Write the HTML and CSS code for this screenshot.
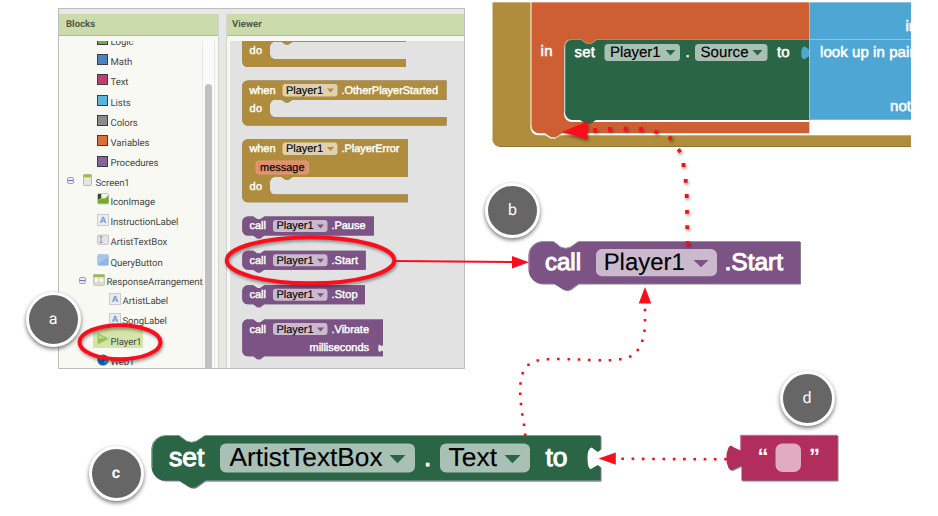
FILE: index.html
```html
<!DOCTYPE html>
<html lang="en">
<head>
<meta charset="utf-8">
<title>Blocks tutorial</title>
<link rel="stylesheet" href="styles.css">
</head>
<body>
<main class="canvas">
  <section class="window">
    <div class="pane pane-blocks">
      <h2 class="pane-title">Blocks</h2>
      <div class="tree">
        <ul class="rows">
          <li class="row d2"><i class="swatch logic"></i><span>Logic</span></li>
          <li class="row d2"><i class="swatch math"></i><span>Math</span></li>
          <li class="row d2"><i class="swatch text"></i><span>Text</span></li>
          <li class="row d2"><i class="swatch lists"></i><span>Lists</span></li>
          <li class="row d2"><i class="swatch colors"></i><span>Colors</span></li>
          <li class="row d2"><i class="swatch variables"></i><span>Variables</span></li>
          <li class="row d2"><i class="swatch procedures"></i><span>Procedures</span></li>
          <li class="row short d0"><i class="toggle"></i><svg class="icon icon-screen" viewBox="0 0 12 12"><rect x="1.5" y=".5" width="8" height="11" rx="1" fill="#e6e6e0" stroke="#b5b9a9"/><path d="M1.5 .7h8v2.6h-8z" fill="#9dbb45"/></svg><span>Screen1</span></li>
          <li class="row short d2"><svg class="icon" viewBox="0 0 12 12"><rect x=".5" y=".5" width="11" height="10.5" rx="1" fill="#dce8cf" stroke="#c3c9bd"/><path d="M1 1h3.5v4L1 7z" fill="#3d4b2d"/><path d="M1 10.5V7.500l4-2 3 0 3.500-3v8z" fill="#75aa25"/><path d="M4.500 1h6.500v1L8 5H4.500z" fill="#f2f5ed"/></svg><span>IconImage</span></li>
          <li class="row d2"><i class="icon label-icon">A</i><span>InstructionLabel</span></li>
          <li class="row d2"><svg class="icon" viewBox="0 0 12 12"><rect x=".5" y="1" width="11" height="9.500" rx="1" fill="#e4e4e6" stroke="#c6c6c9"/><path d="M2.500 2.500h3M4 2.500v6M2.500 8.500h3" stroke="#9295a4" fill="none"/></svg><span>ArtistTextBox</span></li>
          <li class="row d2"><svg class="icon" viewBox="0 0 12 12"><rect x=".5" y=".5" width="11" height="11" rx="1.500" fill="#8fb7e2" stroke="#b3cbe5"/><path d="M1 1h10v2L1 10z" fill="#a6c6ea"/></svg><span>QueryButton</span></li>
          <li class="row short d1"><i class="toggle"></i><svg class="icon icon-arr" viewBox="0 0 12 12"><rect x=".5" y=".5" width="11" height="11" rx="1" fill="#d9ddcf" stroke="#c5cabb"/><path d="M.5.500h11v2.500H.5z" fill="#9dbb45"/><path d="M2 4.500h3v3H2zM7 4.500h3v3H7z" fill="#fff"/></svg><span>ResponseArrangement</span></li>
          <li class="row short d3"><i class="icon label-icon">A</i><span>ArtistLabel</span></li>
          <li class="row d3"><i class="icon label-icon">A</i><span>SongLabel</span></li>
          <li class="row d2 selected"><svg class="icon" viewBox="0 0 12 12"><path d="M.8 .3 11.500 5.800 .8 11.300z" fill="#94bf4b" stroke="#b3ce83"/><path d="M2 2.200 8.500 5.500H2z" fill="#c5dc95"/></svg><span>Player1</span></li>
          <li class="row d2"><svg class="icon" viewBox="0 0 12 12"><circle cx="6" cy="6" r="5.600" fill="#1560ad"/><path d="M2 2q3-2 5 0l-1 3-3 2zM8 5l3 1-2 4-2-2z" fill="#389bdb"/></svg><span>Web1</span></li>
        </ul>
        <div class="scrollbar"><div class="thumb"></div></div>
      </div>
    </div>
    <div class="pane pane-viewer">
      <h2 class="pane-title">Viewer</h2>
      <svg class="workspace" viewBox="230 41 234 327">
        <g class="gold raised-s">
          <path d="M242.300 36H406v5.700H292.500l-4 2.800h-3l-4-2.800H275a5 5 0 0 0-5 5v7.600a5 5 0 0 0 5 5H406V67H247.800a5.500 5.500 0 0 1-5.500-5.500z"/>
          <path d="M247.800 80.500H446.500V99.700H292.500l-4 2.800h-3l-4-2.800H275a5 5 0 0 0-5 5v7.600a5 5 0 0 0 5 5H446.500V125.500H247.800a5.500 5.500 0 0 1-5.500-5.500V86a5.500 5.500 0 0 1 5.500-5.500z"/>
          <path d="M247.800 139.200H408V177H292.500l-4 2.800h-3l-4-2.800H275a5 5 0 0 0-5 5v7.600a5 5 0 0 0 5 5H408V202.300H247.800a5.500 5.500 0 0 1-5.500-5.500V144.700a5.500 5.500 0 0 1 5.500-5.500z"/>
        </g>
        <g class="purple raised-s">
          <path d="M247.800 216.500h5.500l4 2.800h3l4-2.800H374v19H264.300l-4 2.900h-3l-4-2.900h-5.500a5.500 5.500 0 0 1-5.500-5.500v-8a5.500 5.500 0 0 1 5.500-5.500z"/>
          <path d="M247.800 250.700h5.500l4 2.800h3l4-2.800H365.700v19H264.300l-4 2.900h-3l-4-2.900h-5.500a5.500 5.500 0 0 1-5.500-5.500v-8a5.500 5.500 0 0 1 5.500-5.500z"/>
          <path d="M247.800 285.300h5.500l4 2.800h3l4-2.800H365v19H264.300l-4 2.900h-3l-4-2.900h-5.500a5.500 5.500 0 0 1-5.500-5.500v-8a5.500 5.500 0 0 1 5.500-5.500z"/>
          <path d="M247.800 319.600h5.500l4 2.800h3l4-2.800H383v25.500l-1.200 1-3-2q-1.500 4 0 8.500l3-1.800 1.200 1v4.500H264.300l-4 2.900h-3l-4-2.900h-5.500a5.500 5.500 0 0 1-5.500-5.500v-26a5.500 5.500 0 0 1 5.500-5.500z"/>
        </g>
        <g class="pill-gold">
          <rect x="282.500" y="84" width="55" height="12.500" rx="3"/>
          <rect x="282.500" y="142.500" width="55" height="12.500" rx="3"/>
        </g>
        <rect class="pill-msg" x="256" y="161" width="52.500" height="13" rx="3"/>
        <g class="pill-purple">
          <rect x="273" y="220" width="54.500" height="12" rx="3"/>
          <rect x="273" y="254.200" width="54.500" height="12" rx="3"/>
          <rect x="273" y="288.800" width="54.500" height="12" rx="3"/>
          <rect x="273" y="323" width="54.500" height="12" rx="3"/>
        </g>
        <path class="gold" d="M327 88.500h7l-3.500 4zM327 147h7l-3.500 4z"/>
        <path class="purple" d="M317 224.500h7l-3.500 4zM317 258.700h7l-3.500 4zM317 293.200h7l-3.500 4zM317 327.500h7l-3.500 4z"/>
        <g class="t small white">
          <text x="249.500" y="53.900" textLength="12.500">do</text>
          <text x="249.500" y="93.800" textLength="26">when</text>
          <text x="341.500" y="93.800" textLength="96.500">.OtherPlayerStarted</text>
          <text x="249.500" y="112.400" textLength="12.500">do</text>
          <text x="249.500" y="152.200" textLength="26">when</text>
          <text x="341.500" y="152.200" textLength="58">.PlayerError</text>
          <text x="249.500" y="189.700" textLength="12.500">do</text>
          <text x="249.500" y="229.300" textLength="16.500">call</text>
          <text x="331.500" y="229.300" textLength="34">.Pause</text>
          <text x="249.500" y="263.800" textLength="16.500">call</text>
          <text x="331.500" y="263.800" textLength="26.500">.Start</text>
          <text x="249.500" y="298.300" textLength="16.500">call</text>
          <text x="331.500" y="298.300" textLength="26">.Stop</text>
          <text x="249.500" y="332.600" textLength="16.500">call</text>
          <text x="331.500" y="332.600" textLength="37.500">.Vibrate</text>
          <text x="309.500" y="351" textLength="59.500">milliseconds</text>
        </g>
        <g class="t small black">
          <text x="286" y="93.800" textLength="37">Player1</text>
          <text x="286" y="152.200" textLength="37">Player1</text>
          <text x="260" y="171" textLength="44.500">message</text>
          <text x="276.500" y="229.300" textLength="37">Player1</text>
          <text x="276.500" y="263.800" textLength="37">Player1</text>
          <text x="276.500" y="298.300" textLength="37">Player1</text>
          <text x="276.500" y="332.600" textLength="37">Player1</text>
        </g>
      </svg>
    </div>
  </section>

  <svg class="layer" viewBox="0 0 938 516">
    <defs>
      <clipPath id="crop"><rect x="492" y="2" width="419" height="146"/></clipPath>
    </defs>
    <g clip-path="url(#crop)">
      <path class="gold" d="M492.300 0H911V147H500.500a8 8 0 0 1-8.200-8z"/>
      <path class="white-fill" d="M530.500 0H911V135.300H560.500l-5 3.200h-5l-5-3.200H538a8 8 0 0 1-7.500-7z"/>
      <path class="orange" d="M531.500 0H809.300V133.300H562l-6 4h-5l-6-4H539a7.500 7.500 0 0 1-7.500-7.500z"/>
      <path class="white-fill" d="M564 112V46a7 7 0 0 1 7-7H809.300V122H572a8 8 0 0 1-8-8z"/>
      <path class="green" d="M572 39.300h9l5.500 4h5l5.500-4H809.300V120H596l-5.500 3.800h-5L580 120h-7.500a7.500 7.500 0 0 1-7.500-7.500V46.800a7 7 0 0 1 7-7.500z"/>
      <path class="orange" d="M564 38.500H809.300V39.300H597l-5.500 4h-5l-5.500-4H564z"/>
      <path class="edge-green" d="M565 112V47a7 7 0 0 1 7-7.500h9l5.500 4h5l5.500-4H809"/>
      <path class="orange" d="M563.500 38v9h.8a7.500 7.500 0 0 1 7.500-8V38z"/>
      <path class="blue" d="M809.300 0H911V119.700H809.300V56l-4.500 3q-3.500 1-3.500-6t3.500-6.500l4.500 3z"/>
      <path d="M809.500 2V119M809.500 39.500H911" fill="none" stroke="#8dc6e4"/>
      <path d="M531.300 2V126M561 135.600H911" fill="none" stroke="#e3a788" stroke-width=".7"/>
      <path d="M492 2.500H911M492.500 2V138" fill="none" stroke="#fff" stroke-opacity=".35"/>
      <path d="M500 146.500H911" fill="none" stroke="#947431"/>
      <g class="pill-green"><rect x="604.500" y="44" width="75.500" height="17" rx="3.500"/><rect x="695" y="44" width="72.500" height="17" rx="3.500"/></g>
      <path class="green" d="M665.500 50h10l-5 5.500zM752.500 50h10l-5 5.500z"/>
      <g class="t mid white">
        <text x="540.500" y="56" textLength="12">in</text>
        <text x="574.500" y="57" textLength="20.500">set</text>
        <text x="685.500" y="57">.</text>
        <text x="777" y="57" textLength="12.500">to</text>
        <text x="820" y="57" textLength="102">look up in pairs</text>
        <text x="905.500" y="30.500">in</text>
        <text x="890" y="111" textLength="21">not</text>
      </g>
      <g class="t mid black"><text x="610" y="57" textLength="50.500">Player1</text><text x="700.500" y="57" textLength="48">Source</text></g>
    </g>

    <g class="raised">
      <path class="purple" d="M542.500 241.500H553.500l7 5.500q5 2.500 10 0l8-5.500H800V283.500H578l-7.500 5.500q-4 2-8 0l-8.500-5.500H542.500a14 14 0 0 1-14-14V255.500a14 14 0 0 1 14-14z"/>
      <path class="edge-purple" d="M529 270V255.500a14 14 0 0 1 14-14h10.500l7 5.500q5 2.500 10 0l8-5.500H800"/>
    </g>
    <rect class="pill-purple" x="596" y="249" width="121" height="27.300" rx="6"/>
    <path class="purple" d="M693.500 260h15l-7.500 7.300z"/>
    <g class="t big-call white"><text x="545" y="270.300" textLength="36" lengthAdjust="spacingAndGlyphs">call</text><text x="724.500" y="270.300" textLength="58.500" lengthAdjust="spacingAndGlyphs">.Start</text></g>
    <text class="t big-call black" x="603.700" y="270.300" textLength="81" lengthAdjust="spacingAndGlyphs">Player1</text>

    <g class="raised">
      <path class="green" d="M165.500 435.500H179l7.500 5.500q5 2.500 10 0l8.500-5.500H600.500V480.500H205l-8.500 6q-4 2.500-8 0l-9.500-6H165.500a14 14 0 0 1-14-14V449.500a14 14 0 0 1 14-14z"/>
    </g>
    <path class="edge-green" d="M152 468V449.500a14 14 0 0 1 14-14h13l7.500 5.500q5 2.500 10 0l8.500-5.500H600M206 481H601"/>
    <path class="white-fill" d="M602 449l-4.300 3-6-4.500q-4.200 1-4.200 10.500t3 11.200l7.200-4.200 4.300 3z"/>
    <g class="pill-green"><rect x="220" y="443.500" width="195" height="29" rx="6"/><rect x="440" y="443.500" width="90" height="29" rx="6"/></g>
    <path class="green" d="M389.500 455h16l-8 8.300zM504.500 455h16l-8 8.300z"/>
    <g class="t big-set white"><text x="169" y="466" textLength="35.500" lengthAdjust="spacingAndGlyphs">set</text><text x="424" y="466">.</text><text x="545.500" y="466" textLength="22" lengthAdjust="spacingAndGlyphs">to</text></g>
    <g class="t big-set black"><text x="229.500" y="466" textLength="153" lengthAdjust="spacingAndGlyphs">ArtistTextBox</text><text x="448.500" y="466" textLength="48.500" lengthAdjust="spacingAndGlyphs">Text</text></g>

    <g class="raised">
      <path class="magenta" d="M740.500 435H837.500V480.500H741.500V465.500L733 469.500q-2.500 1.500-4.500-1.500-4.500-10 0-20.500 2-3 4.500-.5l7.500 3.500z"/>
    </g>
    <path d="M740.700 450V435.300H837" fill="none" stroke="#ce7695"/>
    <rect x="775.500" y="443.500" width="25.500" height="28.500" rx="7" fill="#e1acc0"/>
    <g class="t quote"><text x="757.500" y="463.500">“</text><text x="809" y="463.500">”</text></g>

    <g class="shadowed" fill="none" stroke="#fb0d1b">
      <ellipse cx="120" cy="342.200" rx="40.500" ry="17" stroke-width="4"/>
      <ellipse cx="310.500" cy="260.300" rx="83.800" ry="23" stroke-width="4"/>
      <path stroke-width="3.800" stroke-linecap="square" d="M595 130h.01M610 129h.01M625.700 128.700h.01M641 129h.01M656.300 132l.01 .003M670.300 138l.01 .005M679.300 150.700l.01 .015M683.500 165h.01M685.700 180.800h.01M686.700 196h.01M687 211.800h.01M687.200 227.200h.01M687.700 243h.01"/>
      <path d="M562 132 587.500 121.500V139.500z" fill="#fb0d1b" stroke="none"/>
    </g>
    <path d="M396 261 514 262" stroke="#fb0d1b" stroke-width="2" fill="none"/>
    <path d="M529 262.200 512 256v12.400zM645 287l6.300 16.500h-12.600zM598.500 458.600l17.300-6.100v12.200z" fill="#fb0d1b"/>
    <path class="dots-sm" d="M645 310h.01M645 320.300h.01M644.500 330.700h.01M642.300 340.700h.01M637.800 350h.01M630.200 356.500h.01M620.300 359.300h.01M610 360.200h.01M599.800 360.200h.01M589.300 360h.01M579 359.500h.01M568.800 359.200h.01M558.300 359h.01M548 359.300h.01M537.800 360.500h.01M528.500 364.800h.01M522.700 373.300h.01M520.500 383.500h.01M520.200 393.800h.01M521 404h.01M522.300 414.500h.01M524 424.700h.01M525.200 434.800h.01M725.500 459.300h.01M715.200 459.300h.01M705 459.200h.01M694.700 459.200h.01M684.400 459.100h.01M674.100 459.100h.01M663.800 459h.01M653.500 459h.01M643.200 458.900h.01M632.900 458.800h.01M622.600 458.800h.01"/>
  </svg>

  <div class="badge badge-a">a</div>
  <div class="badge badge-b">b</div>
  <div class="badge badge-c">c</div>
  <div class="badge badge-d">d</div>
</main>
</body>
</html>
```
FILE: styles.css
```css
* { box-sizing: border-box; }
body { margin: 0; background: #fff; }
.canvas { position: relative; width: 938px; height: 516px; overflow: hidden; text-rendering: geometricPrecision; }

/* designer window */
.window {
  position: absolute; left: 58px; top: 8px; width: 407px; height: 361px;
  display: flex; gap: 7px; padding-top: 5px;
  border: 1px solid #bdbdbd; background: #e7e7e7; overflow: hidden;
  font-family: Roboto, sans-serif; color: #444;
}
.pane { display: flex; flex-direction: column; background: #f8f9f2; border: 1px solid #d2d4ce; border-width: 0 1px; }
.pane-blocks { width: 160px; border-left: 0; }
.pane-viewer { flex: 1; border-right: 0; }
.pane-title {
  flex: none; height: 22px; margin: 0; padding-left: 7px;
  background: #ccdbac; border-bottom: 1px solid #b0bb9a;
  font-size: 9.6px; line-height: 21px; font-weight: 700; color: #525948;
}
.pane-viewer .pane-title { padding-left: 5px; }
.workspace { display: block; width: 234px; height: 327px; margin: 5px 0 0 3px; background: #e2e2e2; }

.tree { display: flex; flex: none; height: 327px; margin-top: 5px; overflow: hidden; }
.rows { flex: none; width: 143px; margin: -13px 0 0; padding: 0; list-style: none; }
.row {
  display: flex; align-items: flex-end; height: 20.3px; white-space: nowrap;
  font-size: 9.6px; line-height: 11px; letter-spacing: -.08px; color: #464646;
}
.short { height: 19.2px; }
.row span { position: relative; top: -.6px; }
.d0 { padding-left: 8px; }
.d1 { padding-left: 20px; }
.d2 { padding-left: 38px; }
.d3 { padding-left: 50px; }
.swatch { flex: none; width: 11px; height: 11px; margin: 0 2.500px 3.500px 0; border: 1px solid #383c46; }
.logic { background: #77ab41; }
.math { background: #4a83c2; }
.text { background: #c13d6e; }
.lists { background: #5ab3da; }
.colors { background: #8b8c8c; }
.variables { background: #d9703a; }
.procedures { background: #8a6498; }
.icon { flex: none; width: 12px; height: 12px; margin: 0 1.500px 3px 0; }
.label-icon {
  border: 1px solid #cbcbcd; background: #ececf0; color: #6b9bd8;
  font: 700 9px/10px "Liberation Sans", sans-serif; text-align: center;
}
.icon-screen { margin-left: 8px; }
.icon-arr { margin-left: 7px; }
.toggle { flex: none; width: 7px; height: 7px; margin-bottom: 5px; border: 1px solid #98a1d3; border-radius: 2px; background: linear-gradient(#eef, #eef 2px, #6873bd 2px, #6873bd 3px, #eef 3px); }
.selected { position: relative; z-index: 0; }
.selected::before { content: ""; position: absolute; z-index: -1; left: 34px; top: 0; width: 50px; height: 20px; background: #d5e4a8; }
.scrollbar { width: 13px; border: 1px solid #e9e9e7; border-width: 0 1px; background: #fafafa; padding: 43px 2px 0 2px; }
.thumb { width: 7px; height: 300px; border-radius: 4px; background: #c1c1c1; }

/* block artwork */
.layer { position: absolute; inset: 0; width: 938px; height: 516px; }
.gold { fill: #b08d3d; }
.purple { fill: #7c5385; }
.green { fill: #2a6545; }
.orange { fill: #cd5f33; }
.blue { fill: #4da6d4; }
.magenta { fill: #b12e5c; }
.white-fill { fill: #fff; }
.pill-gold { fill: #dfd1b0; }
.pill-purple { fill: #cbbace; }
.pill-green { fill: #a9c1b4; }
.pill-msg { fill: #e18e6d; stroke: #eda88c; stroke-width: .7; }
.edge-green { fill: none; stroke: #7ba28e; }
.edge-purple { fill: none; stroke: #a98bb0; }
.raised { filter: drop-shadow(1px 1px 0 rgba(40, 20, 50, .55)); }
.raised-s { filter: drop-shadow(.5px .5px 0 rgba(40, 20, 30, .6)); }

.t { font-family: "Liberation Sans", Arial, sans-serif; }
.small { font-size: 11px; }
.mid { font-size: 15px; }
.big-call { font-size: 24px; }
.big-set { font-size: 26px; }
.white { fill: #fff; stroke: #fff; stroke-width: .4px; }
.mid.white { stroke-width: .55px; }
.big-call.white, .big-set.white { stroke-width: 1px; }
.black { fill: #000; stroke: #000; stroke-width: .15px; }
.quote { font-size: 22px; font-weight: 700; fill: #fff; }

/* annotations */
.shadowed { filter: drop-shadow(1px 2px 1.500px rgba(0, 0, 0, .4)); }
.dots-sm { fill: none; stroke: #fb0d1b; stroke-width: 2.600px; stroke-linecap: square; }
.badge {
  position: absolute; width: 55px; height: 55px; border: 3px solid #fff; border-radius: 50%;
  background: #666; color: #fff; text-align: center;
  font: 16px/48px Roboto, sans-serif; box-shadow: 0 2px 4px rgba(0, 0, 0, .55);
}
.badge-a { left: 25.500px; top: 291.500px; }
.badge-b { left: 485px; top: 182.500px; }
.badge-c { left: 88.500px; top: 445.500px; font-weight: 700; }
.badge-d { left: 779.500px; top: 371px; }
```
